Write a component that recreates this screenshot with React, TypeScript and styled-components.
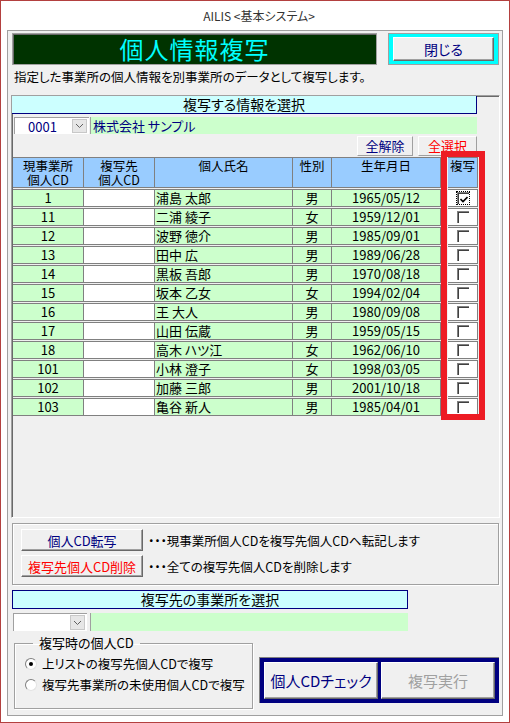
import React from 'react';
import styled, { createGlobalStyle } from 'styled-components';

const GlobalStyle = createGlobalStyle`
  body {
    margin: 0;
    background: #fff;
    font-family: "Noto Sans CJK JP", "Noto Sans", sans-serif;
    font-feature-settings: "palt";
    color: #000;
  }
`;

type Person = {
  cd: string;
  name: string;
  sex: string;
  birth: string;
  checked?: boolean;
};

const people: Person[] = [
  { cd: '1', name: '浦島 太郎', sex: '男', birth: '1965/05/12', checked: true },
  { cd: '11', name: '二浦 綾子', sex: '女', birth: '1959/12/01' },
  { cd: '12', name: '波野 徳介', sex: '男', birth: '1985/09/01' },
  { cd: '13', name: '田中 広', sex: '男', birth: '1989/06/28' },
  { cd: '14', name: '黒板 吾郎', sex: '男', birth: '1970/08/18' },
  { cd: '15', name: '坂本 乙女', sex: '女', birth: '1994/02/04' },
  { cd: '16', name: '王 大人', sex: '男', birth: '1980/09/08' },
  { cd: '17', name: '山田 伝蔵', sex: '男', birth: '1959/05/15' },
  { cd: '18', name: '高木 ハツ江', sex: '女', birth: '1962/06/10' },
  { cd: '101', name: '小林 澄子', sex: '女', birth: '1998/03/05' },
  { cd: '102', name: '加藤 三郎', sex: '男', birth: '2001/10/18' },
  { cd: '103', name: '亀谷 新人', sex: '男', birth: '1985/04/01' },
];

// 列幅（右罫線込み）
const COLS = '71px 71px 138px 39px 109px 7px 30px';

const DropArrow = () => (
  <svg width="9" height="6" viewBox="0 0 9 6">
    <polyline points="1,1 4.5,4.5 8,1" fill="none" stroke="#606060" strokeWidth="1" />
  </svg>
);

const App: React.FC = () => {
  return (
    <>
      <GlobalStyle />
      <Frame>
        <TitleBar>AILIS &lt;基本システム&gt;</TitleBar>
        <Client>
          <HeaderRow>
            <TitleBox>個人情報複写</TitleBox>
            <CloseFrame>
              <BevelButton $color="#000080" $size={14}>閉じる</BevelButton>
            </CloseFrame>
          </HeaderRow>
          <Description>指定した事業所の個人情報を別事業所のデータとして複写します。</Description>

          <MainPanel>
            <SectionBar $width={465}>複写する情報を選択</SectionBar>
            <ComboRow>
              <Combo $width={75}>
                <ComboText>0001</ComboText>
                <DropButton><DropArrow /></DropButton>
              </Combo>
              <GreenField $width={387}>株式会社 サンプル</GreenField>
            </ComboRow>
            <SelectRow>
              <SmallButton $color="#000080" $width={56}>全解除</SmallButton>
              <SmallButton $color="#ff0000" $width={59}>全選択</SmallButton>
            </SelectRow>

            <Table>
              <HeadRow>
                <HeadCell>
                  <HeadLine>現事業所</HeadLine>
                  <HeadLine>個人CD</HeadLine>
                </HeadCell>
                <HeadCell>
                  <HeadLine>複写先</HeadLine>
                  <HeadLine>個人CD</HeadLine>
                </HeadCell>
                <HeadCell><HeadLine>個人氏名</HeadLine></HeadCell>
                <HeadCell><HeadLine>性別</HeadLine></HeadCell>
                <HeadCell><HeadLine>生年月日</HeadLine></HeadCell>
                <Spacer />
                <HeadCell><HeadLine>複写</HeadLine></HeadCell>
              </HeadRow>
              {people.map((p) => (
                <DataRow key={p.cd}>
                  <Cell $bg="#ccffcc" $align="center">{p.cd}</Cell>
                  <Cell $bg="#fff" />
                  <Cell $bg="#ccffcc" $align="left">{p.name}</Cell>
                  <Cell $bg="#ccffcc" $align="center">{p.sex}</Cell>
                  <Cell $bg="#ccffcc" $align="center">{p.birth}</Cell>
                  <Spacer />
                  <Cell $bg="#fff" $align="center">
                    <CheckBox $checked={!!p.checked}>
                      {p.checked && (
                        <svg width="8" height="7" viewBox="0 0 8 7">
                          <polyline points="0.5,3 3,5.5 7.5,1" fill="none" stroke="#000" strokeWidth="1.6" />
                        </svg>
                      )}
                    </CheckBox>
                  </Cell>
                </DataRow>
              ))}
            </Table>
            <RedMark />
          </MainPanel>

          <ActionPanel>
            <ActionLine>
              <BevelButton $color="#000080" $size={13} $width={122} $height={22}>個人CD転写</BevelButton>
              <ActionNote>・・・現事業所個人CDを複写先個人CDへ転記します</ActionNote>
            </ActionLine>
            <ActionLine>
              <BevelButton $color="#ff0000" $size={13} $width={122} $height={22}>複写先個人CD削除</BevelButton>
              <ActionNote>・・・全ての複写先個人CDを削除します</ActionNote>
            </ActionLine>
          </ActionPanel>

          <TargetBar $width={396}>複写先の事業所を選択</TargetBar>
          <TargetRow>
            <Combo $width={74}>
              <ComboText />
              <DropButton><DropArrow /></DropButton>
            </Combo>
            <GreenField $width={318} />
          </TargetRow>

          <BottomRow>
            <ModeGroup>
              <ModeLegend>複写時の個人CD</ModeLegend>
              <RadioLine>
                <Radio $checked />
                上リストの複写先個人CDで複写
              </RadioLine>
              <RadioLine>
                <Radio $checked={false} />
                複写先事業所の未使用個人CDで複写
              </RadioLine>
            </ModeGroup>
            <RunFrame>
              <BevelButton $color="#000080" $size={15} $width={114} $height={37}>個人CDチェック</BevelButton>
              <BevelButton $color="#a0a0a0" $size={15} $width={114} $height={37}>複写実行</BevelButton>
            </RunFrame>
          </BottomRow>
        </Client>
      </Frame>
    </>
  );
};

const Frame = styled.div`
  width: 510px;
  height: 723px;
  box-sizing: border-box;
  border: 1px solid #b3403f;
  background: #fff;
  display: flex;
  flex-direction: column;
`;

const TitleBar = styled.div`
  height: 29px;
  display: flex;
  align-items: center;
  justify-content: center;
  font-size: 12px;
  color: #333;
  padding-left: 8px;
`;

const Client = styled.div`
  flex: 1;
  margin: 0 6px 6px;
  border: 1px solid #a0a0a0;
  background: #f0f0f0;
  display: flex;
  flex-direction: column;
  align-items: flex-start;
`;

const HeaderRow = styled.div`
  display: flex;
  margin: 2px 0 0 4px;
  gap: 11px;
`;

const TitleBox = styled.div`
  width: 365px;
  height: 32px;
  box-sizing: border-box;
  background: #003300;
  border: 1px solid #a0a0a0;
  box-shadow: inset 1px 1px 0 #696969;
  color: #00ffff;
  font-size: 24px;
  line-height: 30px;
  text-align: center;
  letter-spacing: 1px;
`;

const CloseFrame = styled.div`
  width: 111px;
  height: 32px;
  box-sizing: border-box;
  border: 1px solid #a0a0a0;
  padding: 3px 4px 3px 4px;
  background: #00ffff;
  display: flex;
`;

const BevelButton = styled.div<{ $color: string; $size: number; $width?: number; $height?: number }>`
  flex: ${(p) => (p.$width ? 'none' : '1')};
  width: ${(p) => (p.$width ? `${p.$width}px` : 'auto')};
  height: ${(p) => (p.$height ? `${p.$height}px` : 'auto')};
  box-sizing: border-box;
  background: #f0f0f0;
  border: 1px solid;
  border-color: #fff #696969 #696969 #fff;
  box-shadow: inset -1px -1px 0 #a0a0a0;
  color: ${(p) => p.$color};
  font-size: ${(p) => p.$size}px;
  display: flex;
  align-items: center;
  justify-content: center;
  white-space: nowrap;
`;

const Description = styled.div`
  margin: 1px 0 0 6px;
  height: 22px;
  line-height: 22px;
  font-size: 12.5px;
`;

const MainPanel = styled.div`
  position: relative;
  margin: 7px 0 0 3px;
  width: 489px;
  height: 423px;
  box-sizing: border-box;
  border: 1px solid;
  border-color: #a0a0a0 #fff #fff #a0a0a0;
  box-shadow: inset 1px 1px 0 #696969;
  display: flex;
  flex-direction: column;
`;

const SectionBar = styled.div<{ $width: number }>`
  width: ${(p) => p.$width}px;
  height: 18px;
  box-sizing: border-box;
  background: #ccffff;
  border-right: 1px solid #000080;
  border-bottom: 1px solid #000080;
  font-size: 14px;
  line-height: 17px;
  text-align: center;
`;

const ComboRow = styled.div`
  display: flex;
  gap: 1px;
  margin: 3px 0 0 2px;
  height: 17px;
`;

const Combo = styled.div<{ $width: number }>`
  width: ${(p) => p.$width}px;
  box-sizing: border-box;
  background: #fff;
  border-top: 1px solid #a0a0a0;
  border-left: 1px solid #a0a0a0;
  display: flex;
  align-items: stretch;
  padding: 1px 2px 1px 0;
`;

const ComboText = styled.div`
  flex: 1;
  color: #000080;
  font-size: 13px;
  line-height: 15px;
  padding-left: 13px;
`;

const DropButton = styled.div`
  width: 15px;
  box-sizing: border-box;
  background: #e6e6e6;
  border: 1px solid #c8c8c8;
  display: flex;
  align-items: center;
  justify-content: center;
`;

const GreenField = styled.div<{ $width: number }>`
  width: ${(p) => p.$width}px;
  box-sizing: border-box;
  background: #ccffcc;
  border-left: 1px solid #a0a0a0;
  color: #000080;
  font-size: 13px;
  line-height: 17px;
  padding-left: 2px;
`;

const SelectRow = styled.div`
  display: flex;
  justify-content: flex-end;
  gap: 5px;
  width: 465px;
  margin-top: 2px;
  height: 20px;
`;

const SmallButton = styled.div<{ $color: string; $width: number }>`
  width: ${(p) => p.$width}px;
  box-sizing: border-box;
  background: #f0f0f0;
  border: 1px solid;
  border-color: #fff #a0a0a0 #a0a0a0 #fff;
  color: ${(p) => p.$color};
  font-size: 13px;
  line-height: 18px;
  text-align: center;
`;

const Table = styled.div`
  margin: 1px 0 0 1px;
  display: flex;
  flex-direction: column;
  gap: 1px;
`;

const HeadRow = styled.div`
  display: grid;
  grid-template-columns: ${COLS};
  height: 31px;
`;

const HeadCell = styled.div`
  background: #99ccff;
  box-sizing: border-box;
  border-top: 1px solid #808080;
  border-bottom: 1px solid #808080;
  border-right: 1px solid #808080;
  display: flex;
  flex-direction: column;
  align-items: center;
  padding-top: 1px;
`;

const HeadLine = styled.span`
  font-size: 12.5px;
  line-height: 14px;
  height: 14px;
  white-space: nowrap;
`;

const DataRow = styled.div`
  display: grid;
  grid-template-columns: ${COLS};
  height: 18px;
`;

const Cell = styled.div<{ $bg: string; $align?: 'left' | 'center' }>`
  background: ${(p) => p.$bg};
  box-sizing: border-box;
  border-top: 1px solid #808080;
  border-bottom: 1px solid #808080;
  border-right: 1px solid #808080;
  font-size: 13px;
  line-height: 16px;
  padding-left: ${(p) => (p.$align === 'left' ? '1px' : '0')};
  white-space: nowrap;
  display: flex;
  align-items: center;
  justify-content: ${(p) => (p.$align === 'center' ? 'center' : 'flex-start')};
`;

const Spacer = styled.div``;

const CheckBox = styled.span<{ $checked: boolean }>`
  width: 12px;
  height: 12px;
  box-sizing: border-box;
  background: #fff;
  border-top: 1px solid #808080;
  border-left: 1px solid #808080;
  box-shadow: inset 1px 1px 0 #404040;
  outline: ${(p) => (p.$checked ? '1px dotted #000' : 'none')};
  display: flex;
  align-items: center;
  justify-content: center;
  padding: 1px 0 0 1px;
`;

const RedMark = styled.div`
  position: absolute;
  left: 429px;
  top: 55px;
  width: 44px;
  height: 269px;
  box-sizing: border-box;
  border: 6px solid #ed1c24;
  pointer-events: none;
`;

const ActionPanel = styled.div`
  margin: 5px 0 0 4px;
  width: 487px;
  height: 62px;
  box-sizing: border-box;
  border: 1px solid #a0a0a0;
  box-shadow: inset 1px 1px 0 #fff, 1px 1px 0 #fff;
  padding: 5px 0 0 8px;
  display: flex;
  flex-direction: column;
  gap: 4px;
`;

const ActionLine = styled.div`
  display: flex;
  align-items: center;
  gap: 5px;
`;

const ActionNote = styled.span`
  font-size: 12.5px;
`;

const TargetBar = styled(SectionBar)`
  margin: 5px 0 0 4px;
  height: 19px;
  border: 1px solid #000080;
  line-height: 17px;
`;

const TargetRow = styled(ComboRow)`
  margin: 4px 0 0 5px;
  height: 18px;
  gap: 3px;
`;

const BottomRow = styled.div`
  display: flex;
  align-items: flex-start;
  margin: 5px 0 0 6px;
  gap: 6px;
`;

const ModeGroup = styled.fieldset`
  margin: 0;
  width: 239px;
  height: 73px;
  box-sizing: border-box;
  border: 1px solid #a0a0a0;
  box-shadow: inset 1px 1px 0 #fff, 1px 1px 0 #fff;
  padding: 3px 0 0 10px;
  min-width: 0;
  display: flex;
  flex-direction: column;
`;

const ModeLegend = styled.legend`
  margin-left: 8px;
  padding: 0 6px;
  font-size: 13px;
  line-height: 14px;
`;

const RadioLine = styled.label`
  display: flex;
  align-items: center;
  gap: 5px;
  height: 21px;
  font-size: 12.5px;
  white-space: nowrap;
`;

const Radio = styled.span<{ $checked: boolean }>`
  flex: none;
  width: 12px;
  height: 12px;
  box-sizing: border-box;
  border-radius: 50%;
  background: #fff;
  border: 1px solid;
  border-color: #808080 #e3e3e3 #e3e3e3 #808080;
  display: flex;
  align-items: center;
  justify-content: center;
  &::after {
    content: '';
    width: 4px;
    height: 4px;
    border-radius: 50%;
    background: ${(p) => (p.$checked ? '#000' : 'transparent')};
  }
`;

const RunFrame = styled.div`
  margin-top: 21px;
  width: 240px;
  height: 46px;
  box-sizing: border-box;
  border-top: 1px solid #808080;
  border-left: 1px solid #808080;
  background: #000080;
  padding: 4px 4px;
  display: flex;
  gap: 3px;
`;

export default App;
